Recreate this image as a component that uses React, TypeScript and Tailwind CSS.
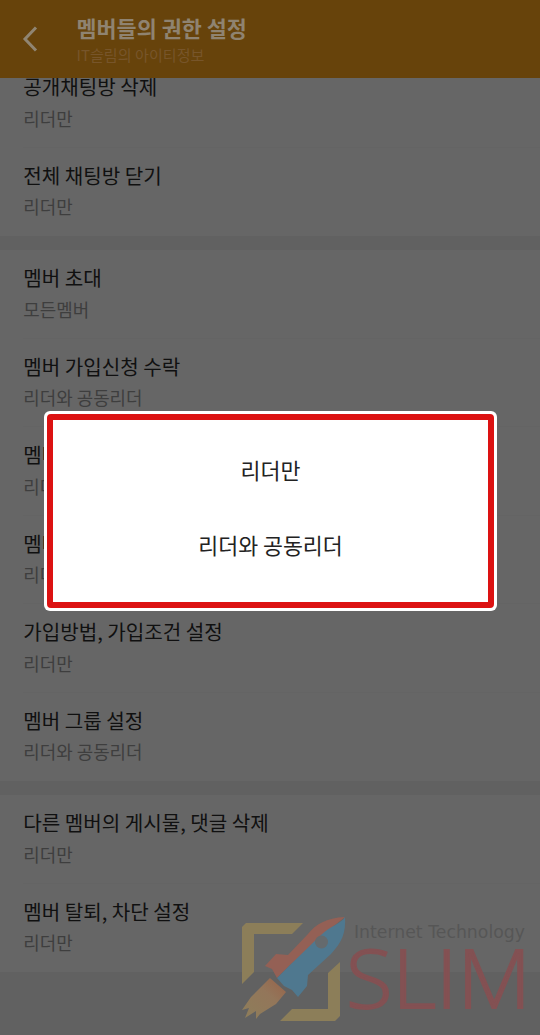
type Permission = { title: string; value: string };

const sections: Permission[][] = [
  [
    { title: "공개채팅방 삭제", value: "리더만" },
    { title: "전체 채팅방 닫기", value: "리더만" },
  ],
  [
    { title: "멤버 초대", value: "모든멤버" },
    { title: "멤버 가입신청 수락", value: "리더와 공동리더" },
    { title: "멤버", value: "리더만" },
    { title: "멤버", value: "리더만" },
    { title: "가입방법, 가입조건 설정", value: "리더만" },
    { title: "멤버 그룹 설정", value: "리더와 공동리더" },
  ],
  [
    { title: "다른 멤버의 게시물, 댓글 삭제", value: "리더만" },
    { title: "멤버 탈퇴, 차단 설정", value: "리더만" },
  ],
];

function Header() {
  return (
    <header className="relative z-10 flex h-[78px] shrink-0 bg-[#67430b]">
      <svg className="ml-[21px] mt-[26px] h-[27px] w-[18px]" viewBox="0 0 18 27" fill="none" stroke="#908572" strokeWidth="3">
        <path d="M15 1.5 4 13l11 11.5" />
      </svg>
      <div className="ml-[37.5px] pt-[12px]">
        <h1 className="text-[21.8px] leading-[32px] font-bold text-[#8f8371]">멤버들의 권한 설정</h1>
        <p className="text-[15.1px] leading-[20px] text-[#77552a]">IT슬림의 아이티정보</p>
      </div>
    </header>
  );
}

function Row({ item, divided }: { item: Permission; divided: boolean }) {
  return (
    <li className="h-[88.5px] pl-[23.3px]">
      <div className={divided ? "h-full border-b border-[#646464] pt-[13px]" : "h-full pt-[13px]"}>
        <div className="text-[20.1px] leading-[30px] text-[#101010]">{item.title}</div>
        <div className="mt-[2.6px] text-[17.9px] leading-[26px] text-[#3e3e3e]">{item.value}</div>
      </div>
    </li>
  );
}

function Watermark() {
  return (
    <svg className="absolute bottom-0 right-0 h-[135px] w-[310px]" viewBox="0 0 310 135">
      <defs>
        <linearGradient id="flame" x1="1" y1="0" x2="0" y2="1">
          <stop offset="0" stopColor="#986249" />
          <stop offset="0.4" stopColor="#93765a" />
          <stop offset="1" stopColor="#8d7e5a" />
        </linearGradient>
      </defs>
      <g fill="#8c7e59">
        <path d="M12 84V27l4-4h57L62 34H24v38z" />
        <path d="M110 62v54l-5 5H50l12-12h36V73z" />
      </g>
      <path d="M40 78 56 92 46 104 30 114 26 119 26 111 15 118 19 108 12 110 21 97z" fill="url(#flame)" />
      <path d="M115 17C96 18 86 24 78 34L58 55 46 54 35 66 42 69 47 78 60 65 82 46 100 29z" fill="#946055" />
      <path d="M115 17C112 23 100 26 91 35L60 65 47 78 54 86 62 90 68 97 77 86 78 75 101 54C112 42 116 33 115 17z" fill="#4f788f" />
      <circle cx="91.5" cy="42" r="6.5" fill="#656a6d" />
      <text x="124" y="38" fontSize="17" textLength="171" lengthAdjust="spacingAndGlyphs" fill="#565656" fontFamily="'DejaVu Sans', sans-serif">
        Internet Technology
      </text>
      <text x="116" y="107.5" fontSize="81" textLength="185" lengthAdjust="spacingAndGlyphs" fill="#835153" fontFamily="'Open Sans', sans-serif" fontWeight="300" stroke="#835153" strokeWidth="1.8">
        SLIM
      </text>
    </svg>
  );
}

function OptionsDialog() {
  return (
    <div className="absolute left-[44px] top-[411px] h-[200px] w-[453px] rounded-[6px] bg-white p-[3px]">
      <div className="flex h-full flex-col items-center rounded-[4px] border-[6px] border-[#dc1212] pt-[32px] text-[21.7px] leading-[36px] text-[#222]">
        <button>리더만</button>
        <button className="mt-[39px]">리더와 공동리더</button>
      </div>
    </div>
  );
}

export default function App() {
  return (
    <main className="relative flex h-[1035px] w-[540px] flex-col overflow-hidden bg-[#616161] font-['Noto_Sans_CJK_KR',sans-serif]">
      <Header />
      <div className="-mt-[19px] flex flex-col gap-[14px]">
        {sections.map((items, i) => (
          <ul key={i} className="bg-[#666]">
            {items.map((item, j) => (
              <Row key={j} item={item} divided={j < items.length - 1} />
            ))}
          </ul>
        ))}
      </div>
      <Watermark />
      <OptionsDialog />
    </main>
  );
}
